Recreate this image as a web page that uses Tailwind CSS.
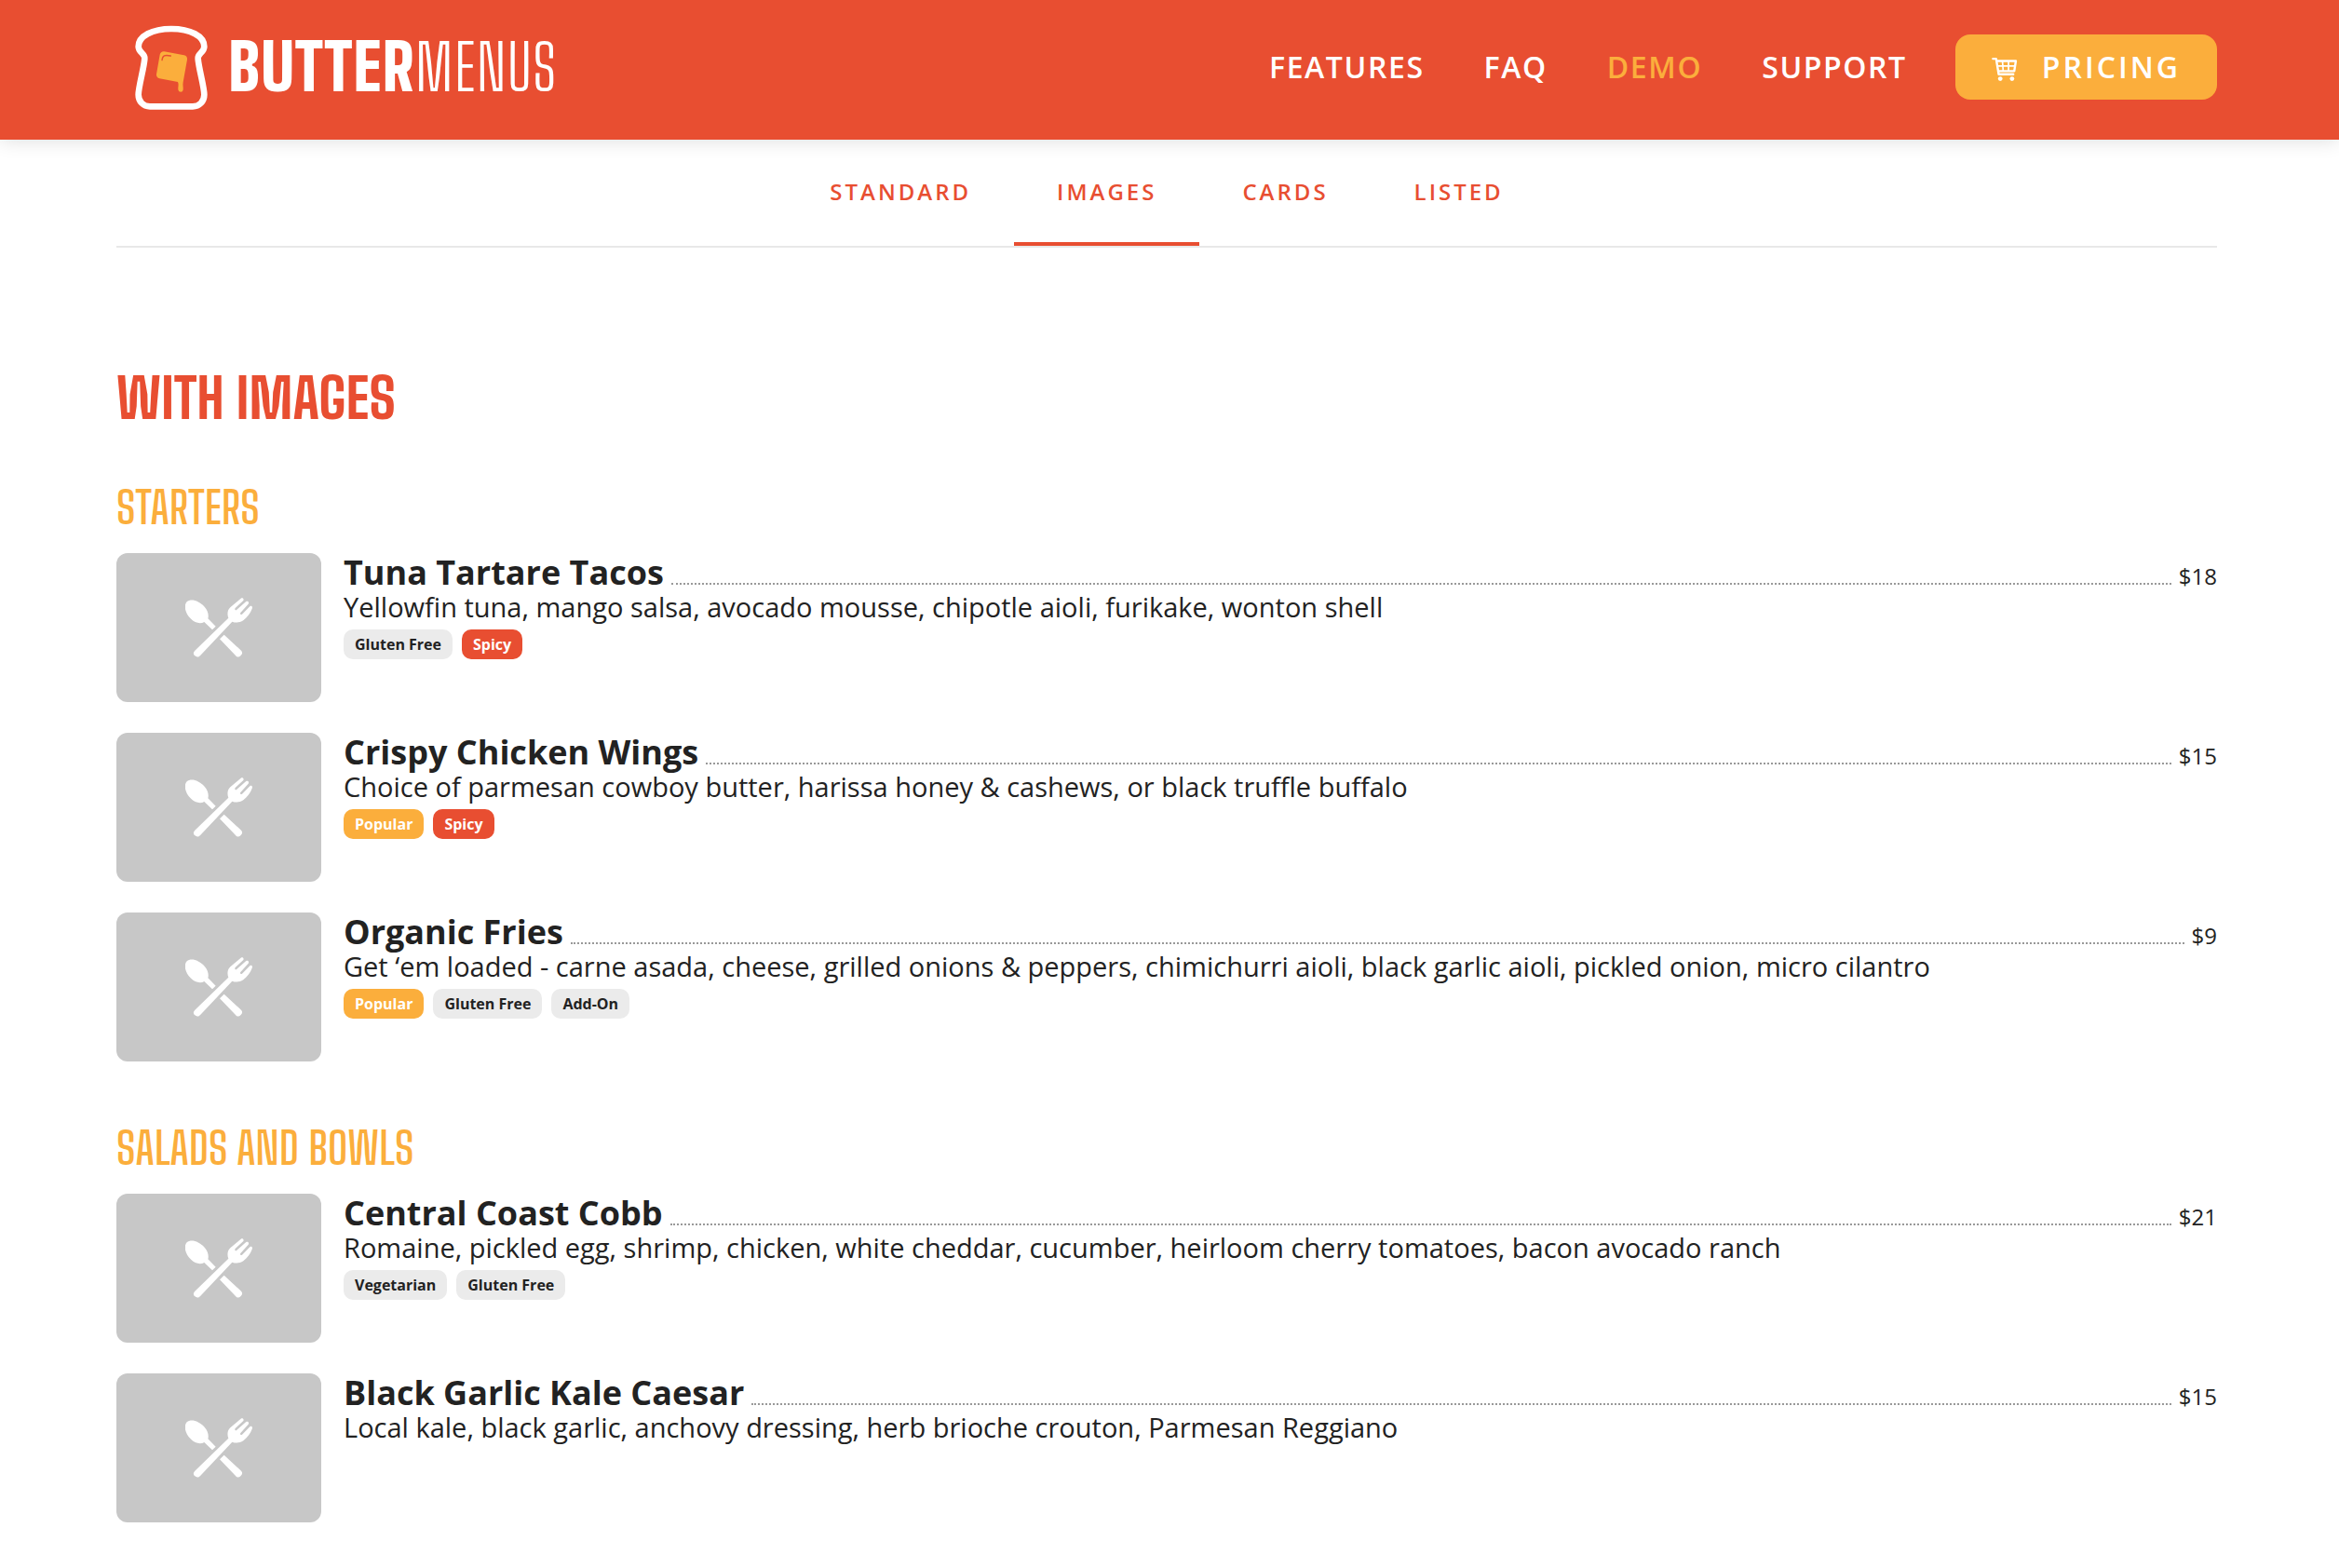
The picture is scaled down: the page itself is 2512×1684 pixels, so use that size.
<!DOCTYPE html>
<html lang="en">
<head>
    <meta charset="UTF-8">
    <meta name="viewport" content="width=device-width, initial-scale=1.0">
    <title>Butter Menus - Demo</title>
    <script src="https://cdn.jsdelivr.net/npm/@tailwindcss/browser@4"></script>
</head>
<body class="bg-white text-[#222222] font-['Open_Sans',sans-serif]">

    <!-- Shared icons -->
    <svg class="hidden" aria-hidden="true">
        <symbol id="utensils" viewBox="57 65 216 192">
            <g fill="#fff">
                <path d="M62 78C75 66 101 74 119 94C131 108 133 122 130 132L155 157L144 168L118 143C106 150 88 147 74 132C56 114 51 89 62 78Z"/>
                <path d="M182 184L237 235C243 241 240 247 235 252C230 257 224 257 219 251L168 198Z"/>
                <path d="M236 67C241 64 247 68 244 74L218 98C215 103 219 107 223 103L252 78C258 74 264 79 260 85L235 113C232 118 236 121 240 118L265 93C270 89 275 94 272 100C267 114 257 127 244 138C232 146 219 146 208 142L106 250C100 257 93 257 88 252C82 247 82 241 88 235L196 130C191 118 193 104 202 96Z"/>
            </g>
        </symbol>
    </svg>

    <!-- Navigation Bar -->
    <header class="relative bg-[#e84e31] text-white h-[150px] pb-[6px] pl-[145px] pr-[131px] flex justify-between items-center shadow-[0_0_20px_rgba(0,0,0,0.15)]">
        <a href="#" class="flex items-center gap-[22px]" aria-label="Butter Menus home">
            <svg class="w-[78px] h-[91px]" viewBox="104 79 234 273" fill="none">
                <path d="M115 148C115 114 160 91 221 91C282 91 327 114 327 148C327 168 305 170 307 187C309 217 327 278 327 303C327 325 311 341 290 341H152C131 341 115 325 115 303C115 278 133 217 135 187C137 170 115 168 115 148Z" stroke="#fff" stroke-width="20"/>
                <path d="M198 164L262 176C269 177 273 183 272 190L259 263C257 272 260 280 259 287C258 297 245 297 243 287C242 278 246 270 242 262L183 251C176 249 172 243 173 237L184 174C186 167 191 163 198 164Z" fill="#fbae3c"/>
                <path d="M191 192C193 177 199 174 219 178" stroke="#e84e31" stroke-width="4" stroke-linecap="round"/>
            </svg>
            <span class="font-['Big_Shoulders_Text','Roboto_Condensed',sans-serif] text-[68px] leading-none font-light tracking-[1px]"><b class="font-black">BUTTER</b>MENUS</span>
        </a>
        <nav class="flex items-center text-[32px] leading-[44px] font-semibold tracking-wider">
            <a href="#" class="mr-16">FEATURES</a>
            <a href="#" class="mr-16">FAQ</a>
            <a href="#" class="mr-16 text-[#fbae3c]">DEMO</a>
            <a href="#" class="mr-[52px]">SUPPORT</a>
            <a href="#" class="h-[70px] px-[39px] flex items-center gap-[26px] rounded-2xl bg-[#fbae3c] tracking-[3px]">
                <svg class="mt-1 w-7 h-7" viewBox="184 122 82 82" fill="none" stroke="#fff" stroke-width="7" stroke-linecap="round" stroke-linejoin="round" aria-hidden="true">
                    <path d="M188 131H198L206 180H252M201 138H260L255 170H205"/>
                    <path d="M203 154H257M218 140L220 168M237 140V168" stroke-width="5"/>
                    <circle cx="211" cy="194" r="7" fill="#fff" stroke="none"/>
                    <circle cx="248" cy="194" r="7" fill="#fff" stroke="none"/>
                </svg>
                PRICING
            </a>
        </nav>
    </header>

    <main class="pl-[125px] pr-[131px]">
        <!-- Demo tabs -->
        <nav class="h-[116px] flex justify-center border-b-2 border-[#e8e8e8] text-[24px] leading-[32px] font-semibold tracking-[3px] text-[#e84e31]">
            <a href="#" class="px-[46px] pt-10">STANDARD</a>
            <a href="#" class="px-[46px] pt-10 border-b-4 border-[#e84e31]" aria-current="page">IMAGES</a>
            <a href="#" class="px-[46px] pt-10">CARDS</a>
            <a href="#" class="px-[46px] pt-10">LISTED</a>
        </nav>

        <h1 class="mt-[130px] font-['Big_Shoulders_Text','Roboto_Condensed',sans-serif] text-[59px] leading-[64px] font-extrabold text-[#e84e31]">WITH IMAGES</h1>

        <!-- Starters -->
        <section class="mt-[60px]">
            <h2 class="mb-6 font-['Big_Shoulders_Text','Roboto_Condensed',sans-serif] text-[48px] leading-[50px] font-[650] text-[#fbae3c]">STARTERS</h2>
            <div class="flex flex-col gap-[33px]">
                <article class="flex gap-6">
                    <div class="w-[220px] h-[160px] shrink-0 rounded-xl bg-[#c7c7c7] flex items-center justify-center">
                        <svg class="w-[72px] h-16"><use href="#utensils"/></svg>
                    </div>
                    <div class="flex-1">
                        <div class="flex items-baseline gap-2">
                            <h3 class="text-[36px] leading-[42px] font-bold">Tuna Tartare Tacos</h3>
                            <span class="flex-1 border-b-2 border-dotted border-[#999999]"></span>
                            <span class="text-[24px] leading-[32px]">$18</span>
                        </div>
                        <p class="text-[29px] leading-[32px]">Yellowfin tuna, mango salsa, avocado mousse, chipotle aioli, furikake, wonton shell</p>
                        <div class="mt-2 flex gap-[10px] text-[16px] leading-[32px] font-bold">
                            <span class="px-3 rounded-[10px] bg-[#ebebeb]">Gluten Free</span>
                            <span class="px-3 rounded-[10px] bg-[#e84e31] text-white">Spicy</span>
                        </div>
                    </div>
                </article>
                <article class="flex gap-6">
                    <div class="w-[220px] h-[160px] shrink-0 rounded-xl bg-[#c7c7c7] flex items-center justify-center">
                        <svg class="w-[72px] h-16"><use href="#utensils"/></svg>
                    </div>
                    <div class="flex-1">
                        <div class="flex items-baseline gap-2">
                            <h3 class="text-[36px] leading-[42px] font-bold">Crispy Chicken Wings</h3>
                            <span class="flex-1 border-b-2 border-dotted border-[#999999]"></span>
                            <span class="text-[24px] leading-[32px]">$15</span>
                        </div>
                        <p class="text-[29px] leading-[32px]">Choice of parmesan cowboy butter, harissa honey &amp; cashews, or black truffle buffalo</p>
                        <div class="mt-2 flex gap-[10px] text-[16px] leading-[32px] font-bold">
                            <span class="px-3 rounded-[10px] bg-[#fbae3c] text-white">Popular</span>
                            <span class="px-3 rounded-[10px] bg-[#e84e31] text-white">Spicy</span>
                        </div>
                    </div>
                </article>
                <article class="flex gap-6">
                    <div class="w-[220px] h-[160px] shrink-0 rounded-xl bg-[#c7c7c7] flex items-center justify-center">
                        <svg class="w-[72px] h-16"><use href="#utensils"/></svg>
                    </div>
                    <div class="flex-1">
                        <div class="flex items-baseline gap-2">
                            <h3 class="text-[36px] leading-[42px] font-bold">Organic Fries</h3>
                            <span class="flex-1 border-b-2 border-dotted border-[#999999]"></span>
                            <span class="text-[24px] leading-[32px]">$9</span>
                        </div>
                        <p class="text-[29px] leading-[32px]">Get ‘em loaded - carne asada, cheese, grilled onions &amp; peppers, chimichurri aioli, black garlic aioli, pickled onion, micro cilantro</p>
                        <div class="mt-2 flex gap-[10px] text-[16px] leading-[32px] font-bold">
                            <span class="px-3 rounded-[10px] bg-[#fbae3c] text-white">Popular</span>
                            <span class="px-3 rounded-[10px] bg-[#ebebeb]">Gluten Free</span>
                            <span class="px-3 rounded-[10px] bg-[#ebebeb]">Add-On</span>
                        </div>
                    </div>
                </article>
            </div>
        </section>

        <!-- Salads and Bowls -->
        <section class="mt-[68px] pb-12">
            <h2 class="mb-6 font-['Big_Shoulders_Text','Roboto_Condensed',sans-serif] text-[48px] leading-[50px] font-[650] text-[#fbae3c]">SALADS AND BOWLS</h2>
            <div class="flex flex-col gap-[33px]">
                <article class="flex gap-6">
                    <div class="w-[220px] h-[160px] shrink-0 rounded-xl bg-[#c7c7c7] flex items-center justify-center">
                        <svg class="w-[72px] h-16"><use href="#utensils"/></svg>
                    </div>
                    <div class="flex-1">
                        <div class="flex items-baseline gap-2">
                            <h3 class="text-[36px] leading-[42px] font-bold">Central Coast Cobb</h3>
                            <span class="flex-1 border-b-2 border-dotted border-[#999999]"></span>
                            <span class="text-[24px] leading-[32px]">$21</span>
                        </div>
                        <p class="text-[29px] leading-[32px]">Romaine, pickled egg, shrimp, chicken, white cheddar, cucumber, heirloom cherry tomatoes, bacon avocado ranch</p>
                        <div class="mt-2 flex gap-[10px] text-[16px] leading-[32px] font-bold">
                            <span class="px-3 rounded-[10px] bg-[#ebebeb]">Vegetarian</span>
                            <span class="px-3 rounded-[10px] bg-[#ebebeb]">Gluten Free</span>
                        </div>
                    </div>
                </article>
                <article class="flex gap-6">
                    <div class="w-[220px] h-[160px] shrink-0 rounded-xl bg-[#c7c7c7] flex items-center justify-center">
                        <svg class="w-[72px] h-16"><use href="#utensils"/></svg>
                    </div>
                    <div class="flex-1">
                        <div class="flex items-baseline gap-2">
                            <h3 class="text-[36px] leading-[42px] font-bold">Black Garlic Kale Caesar</h3>
                            <span class="flex-1 border-b-2 border-dotted border-[#999999]"></span>
                            <span class="text-[24px] leading-[32px]">$15</span>
                        </div>
                        <p class="text-[29px] leading-[32px]">Local kale, black garlic, anchovy dressing, herb brioche crouton, Parmesan Reggiano</p>
                    </div>
                </article>
            </div>
        </section>
    </main>

</body>
</html>
